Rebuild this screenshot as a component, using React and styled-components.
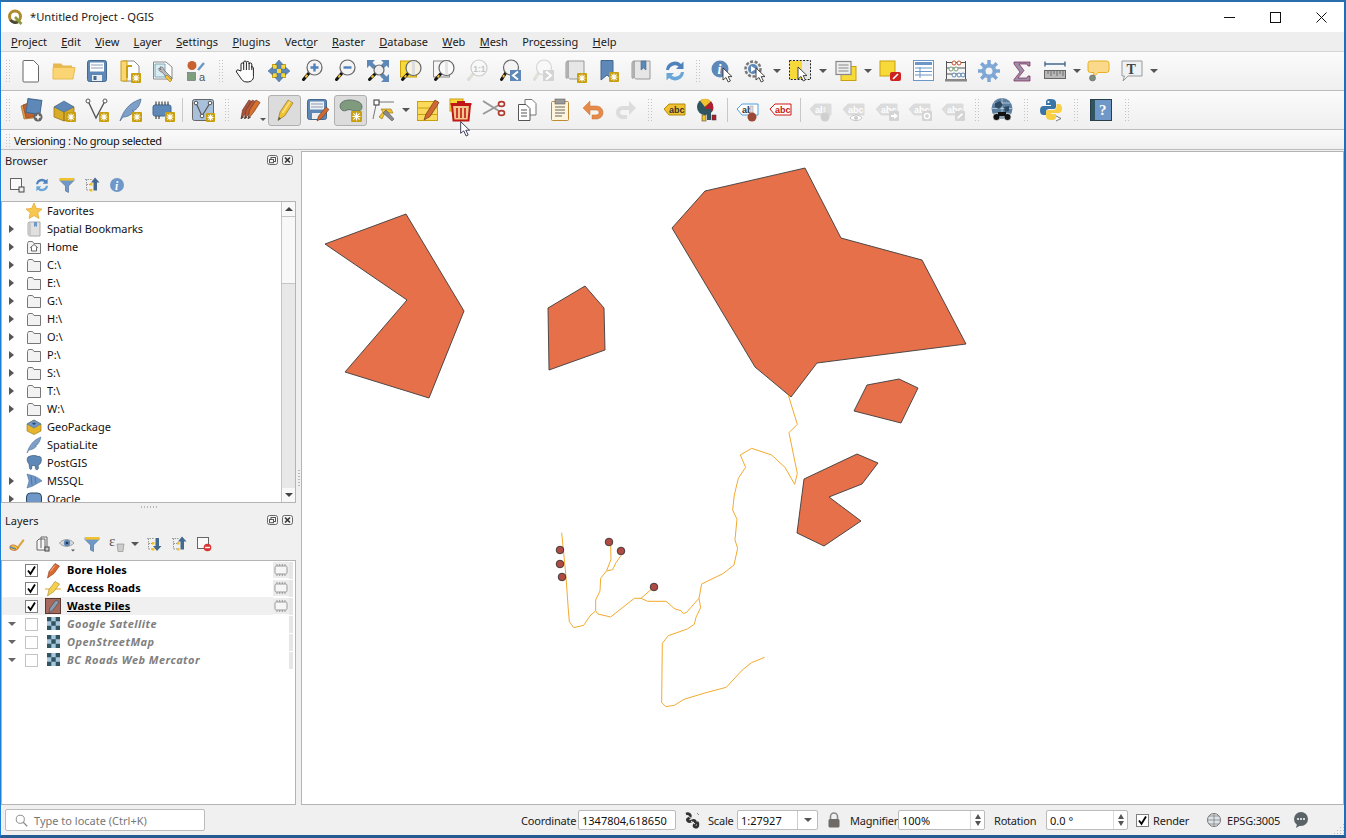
import React from "react";
import styled, { createGlobalStyle } from "styled-components";

const UI_FONT = `"Noto Sans", "Open Sans", "Liberation Sans", sans-serif`;

const GlobalStyle = createGlobalStyle`
  html, body { margin: 0; padding: 0; background: #fff; overflow: hidden; }
  * { box-sizing: border-box; }
`;

const Svg = styled.svg.attrs((p) => ({ viewBox: `0 0 ${p.$v || 24} ${p.$v || 24}` }))`
  width: ${(p) => p.$s || 24}px;
  height: ${(p) => p.$s || 24}px;
  flex: none;
  display: block;
  overflow: visible;
`;

/* shared drawing bits */
const Star = ({ x = 15, y = 15, s = 9 }) => (
  <g transform={`translate(${x} ${y})`}>
    <rect width={s} height={s} rx="1" fill="#c9a010" />
    <path d={`M${s / 2} 1.5V${s - 1.5}M1.5 ${s / 2}H${s - 1.5}M2.4 2.4L${s - 2.4} ${s - 2.4}M${s - 2.4} 2.4L2.4 ${s - 2.4}`} stroke="#fff" strokeWidth="1.1" />
  </g>
);
const Arrow = ({ x = 0, y = 0 }) => (
  <path transform={`translate(${x} ${y})`} d="M0 0V12L3 9.5L5.2 14L7.4 13L5.2 8.6H9Z" fill="#fff" stroke="#333" strokeWidth="0.9" strokeLinejoin="round" />
);
const Lens = ({ cx = 14, cy = 9, r = 7, fill = "#f4f4f4", line = "#666", muted }) => (
  <g>
    <path d={`M${cx - r * 0.7} ${cy + r * 0.7}L3.5 20.5`} stroke={muted ? "#ddd" : "#111"} strokeWidth="3" strokeLinecap="round" />
    <path d={`M${cx - r * 0.7 - 2} ${cy + r * 0.7 + 2}L5.5 18.5`} stroke={muted ? "#e8e4c8" : "#f2c12e"} strokeWidth="2" />
    <circle cx={cx} cy={cy} r={r} fill={fill} stroke={line} strokeWidth="1.2" />
  </g>
);
const Table = ({ x = 0, y = 0, w = 20, h = 20, line = "#6b96c8", head = "#6b96c8" }) => (
  <g transform={`translate(${x} ${y})`}>
    <rect x=".5" y=".5" width={w} height={h} fill="#fff" stroke={line} />
    <rect x="2" y="2" width={w - 3} height="3" fill={head} />
    <path d={`M2 8H${w - 1}M2 11.5H${w - 1}M2 15H${w - 1}M7 7V${h - 2}`} stroke={head} />
  </g>
);
const Scroll = ({ fill = "#c9c9c9" }) => (
  <g>
    <path d="M4 2H20V20H7C5 20 4 19 4 17Z" fill="#e6e6e6" stroke="#999" />
    <path d="M4 2C2 2 2 4 2 5V18C2 20 4 20 4 17Z" fill={fill} stroke="#999" />
  </g>
);
const Tag = ({ fill, line, text = "abc", color = "#333", w = 21 }) => (
  <g>
    <path d={`M1 11L6 6H${w + 1}V17H6Z`} fill={fill} stroke={line} />
    <text x="6" y="15" fontFamily="Liberation Sans, sans-serif" fontWeight="700" fontSize="9" fill={color}>{text}</text>
  </g>
);
const Folder = () => (
  <path d="M1.5 4.5V14.5H14.5V4.5H8L6.5 2.5H2.5Z" fill="#f2f2f2" stroke="#777" />
);
const Stub = ({ x, fill, dx = 0 }) => (
  <g transform={`translate(${x + dx} 0)`}>
    <path d="M0 21L1.5 12L8 2L12 4.5L5.5 14.5Z" fill={fill} stroke="#6d3a26" strokeWidth=".7" />
    <path d="M0 21L.6 18L3 19.4Z" fill="#444" />
  </g>
);

const ICONS = {
  new: <path d="M5 1.5H14.5L19.5 6.5V22a1 1 0 0 1-1 1H5a1 1 0 0 1-1-1V2.5a1 1 0 0 1 1-1Z" fill="#fff" stroke="#666" />,
  open: (<g><path d="M1 8V4.5H9L11 6.5H20V9Z" fill="#e8b84c" /><path d="M1 20V8.5H23L21 20Z" fill="#fbd574" stroke="#e8bb50" /></g>),
  save: (<g><rect x="2.5" y="1.5" width="19" height="21" rx="2" fill="#5d88b8" stroke="#45688f" /><rect x="5" y="3.5" width="14" height="9" fill="#fff" /><path d="M6 6H18M6 9H18" stroke="#8a9db5" /><rect x="7" y="16" width="10" height="6" fill="#eee" /><rect x="8.5" y="17" width="3" height="4" fill="#45688f" /></g>),
  printNew: (<g><path d="M5 2H16L21 7V22H5Z" fill="#fff" stroke="#888" /><path d="M3 2H9V22H3Z" fill="#fbd574" stroke="#c9a010" /><path d="M9 7H14M9 7V19" stroke="#c9a010" strokeWidth="2" /><Star x={13} y={14} s={10} /></g>),
  printMgr: (<g><path d="M2.5 3H15L21 8V20H2.5Z" fill="#fff" stroke="#888" /><path d="M4 5H14V18H4Z" fill="#d8ecf2" stroke="#7aa7b8" /><path d="M9 8a3 3 0 0 1 4 3L21 19L19 22L11 13A3 3 0 0 1 8 9L10 11Z" fill="#bbb" stroke="#555" strokeWidth=".6" /><path d="M16 16L21 21L19 23L14 18Z" fill="#f2c12e" stroke="#8a6d12" strokeWidth=".5" /></g>),
  style: (<g><circle cx="8" cy="6.5" r="4.5" fill="#c8612f" /><rect x="3.5" y="13.5" width="8" height="8" fill="#7d9f7d" stroke="#556" strokeWidth=".5" /><path d="M14 11L20 4" stroke="#6a96c4" strokeWidth="2.4" /><text x="15" y="22" fontFamily="Liberation Sans, sans-serif" fontSize="11" fill="#555">a</text></g>),
  hand: <path d="M7 12V5a1.4 1.4 0 0 1 2.7 0V3a1.4 1.4 0 0 1 2.7 0V3.5a1.4 1.4 0 0 1 2.7 0V5a1.4 1.4 0 0 1 2.7 0V8a1.4 1.4 0 0 1 1.6 1V16C20 20 18 23 13 23C9 23 8 21 6 18L2.5 13a1.5 1.5 0 0 1 2.4-1.7ZM9.7 5V11M12.4 3.5V11M15.1 4V11M17.8 7V11" fill="#fff" stroke="#222" strokeWidth="1" strokeLinejoin="round" />,
  pan: (<g><rect x="5.5" y="5.5" width="13" height="13" fill="#f8d93a" stroke="#c9a010" /><path d="M12 1L16 5.5H14V10H18.5V8L23 12L18.5 16V14H14V18.5H16L12 23L8 18.5H10V14H5.5V16L1 12L5.5 8V10H10V5.5H8Z" fill="#5d88b8" stroke="#45688f" strokeWidth=".5" /><rect x="10" y="10" width="4" height="4" fill="#f8d93a" /></g>),
  zoomIn: (<g><Lens cx={14.5} cy={8.5} r={7.5} /><path d="M14.5 4.5V12.5M10.5 8.5H18.5" stroke="#4f81bd" strokeWidth="2.4" /></g>),
  zoomOut: (<g><Lens cx={14.5} cy={8.5} r={7.5} /><path d="M10.5 8.5H18.5" stroke="#4f81bd" strokeWidth="2.4" /></g>),
  zoomFull: (<g><path d="M1 1H9L6.5 3.5L10 7L7 10L3.5 6.5L1 9ZM23 1V9L20.5 6.5L17 10L14 7L17.5 3.5L15 1ZM23 23H15L17.5 20.5L14 17L17 14L20.5 17.5L23 15Z" fill="#5d88b8" /><Lens cx={13} cy={11} r={5} fill="#eee" /></g>),
  zoomSel: (<g><rect x="1.5" y="2" width="16" height="16" fill="#f8d93a" stroke="#c9a010" /><Lens cx={14.5} cy={9} r={7.5} fill="#f5f3e0" /><path d="M14.5 2V16" stroke="#ddd" strokeWidth="3" /></g>),
  zoomLayer: (<g><rect x="1.5" y="2" width="16" height="16" fill="#f5f5f5" stroke="#888" /><Lens cx={14.5} cy={9} r={7.5} fill="#fafafa" /><path d="M14.5 2V16" stroke="#e4e4e4" strokeWidth="3" /></g>),
  zoom11: (<g><Lens cx={14} cy={9} r={8} fill="#f8f8f8" line="#ccc" muted /><text x="8.2" y="12.5" fontFamily="Liberation Sans, sans-serif" fontWeight="700" fontSize="8.5" fill="#c4c4c4">1:1</text></g>),
  zoomLast: (<g><Lens cx={13} cy={8.5} r={7.5} /><rect x="12" y="11" width="11" height="11" fill="#5d88b8" /><path d="M20 12.5L15 16.5L20 20.5" fill="none" stroke="#fff" strokeWidth="2" /></g>),
  zoomNext: (<g><Lens cx={13} cy={8.5} r={7.5} fill="#f8f8f8" line="#d6d6d6" muted /><rect x="12" y="11" width="11" height="11" fill="#d4d4d4" /><path d="M15 12.5L20 16.5L15 20.5" fill="none" stroke="#fff" strokeWidth="2" /></g>),
  newMap: (<g><Scroll /><Star x={13} y={14} s={10} /></g>),
  newMark: (<g><path d="M4 1.5H16V21L10 16L4 21Z" fill="#5d88b8" stroke="#45688f" /><Star x={12} y={13} s={10} /></g>),
  marks: (<g><Scroll /><path d="M11 2H16V11L13.5 9L11 11Z" fill="#5d88b8" stroke="#45688f" strokeWidth=".6" /></g>),
  refresh: (<g><path d="M3 11A9 9 0 0 1 18 5L20.5 2.5V10H13L15.5 7.5A6 6 0 0 0 6 11Z" fill="#4f81bd" /><path d="M21 13A9 9 0 0 1 6 19L3.5 21.5V14H11L8.5 16.5A6 6 0 0 0 18 13Z" fill="#6aa6d8" /></g>),
  identify: (<g><circle cx="10" cy="10" r="8.5" fill="#5d88b8" /><text x="7.5" y="15" fontFamily="Liberation Serif, serif" fontStyle="italic" fontWeight="700" fontSize="14" fill="#fff">i</text><Arrow x={13} y={9} /></g>),
  actions: (<g><circle cx="10" cy="10" r="7.5" fill="#eee" stroke="#777" strokeWidth="2.5" strokeDasharray="3 1.6" /><circle cx="10" cy="10" r="5" fill="#5d88b8" /><path d="M8 7L13 10L8 13Z" fill="#fff" /><Arrow x={13} y={9} /></g>),
  select: (<g><rect x="1.5" y="1.5" width="21" height="19" fill="#e9e9e9" stroke="#222" strokeDasharray="2 1.4" /><rect x="2" y="2" width="12" height="18" fill="#f8d93a" /><Arrow x={10} y={8} /></g>),
  selectAttr: (<g><rect x="7" y="7.5" width="15" height="14" fill="#f8d93a" stroke="#c9a010" /><rect x="2" y="2.5" width="15" height="13" fill="#eee" stroke="#888" strokeWidth="1.2" /><path d="M4.5 6H14.5M4.5 9H14.5M4.5 12H14.5" stroke="#888" strokeWidth="1.2" /></g>),
  deselect: (<g><rect x="2" y="2" width="15" height="15" fill="#f8d93a" stroke="#c9a010" /><rect x="12" y="13" width="11" height="9" rx="2" fill="#c22" /><path d="M15 20L20 15" stroke="#fff" strokeWidth="1.6" /></g>),
  attr: <Table x={2} y={1} w={20} h={20} />,
  calc: (<g><path d="M2.5 2V21M21.5 2V21M2.5 3.5H21.5M2.5 9H21.5M2.5 15H21.5" stroke="#555" fill="none" /><rect x="1" y="20" width="22" height="2.5" fill="#888" /><circle cx="10" cy="4" r="2" fill="#fff" stroke="#c8512a" /><circle cx="15" cy="4" r="2" fill="#fff" stroke="#c8512a" /><circle cx="7" cy="10" r="2" fill="#fff" stroke="#7d9f7d" /><circle cx="12" cy="10" r="2" fill="#fff" stroke="#7d9f7d" /><circle cx="10" cy="16" r="2" fill="#fff" stroke="#5d88b8" /><circle cx="15" cy="16" r="2" fill="#fff" stroke="#5d88b8" /><circle cx="19" cy="16" r="2" fill="#fff" stroke="#5d88b8" /></g>),
  gear: (<g><circle cx="12" cy="12" r="7.5" fill="#8fb2da" /><path d="M12 1V23M1 12H23M4.2 4.2L19.8 19.8M19.8 4.2L4.2 19.8" stroke="#7ea6d4" strokeWidth="3.4" /><circle cx="12" cy="12" r="3.5" fill="#f2f2f2" /></g>),
  sigma: <path d="M4 3H20V7H18L17 5H9L14 11.5L8 19H17L18 17H20V22H4V20.5L10 13L4 5Z" fill="#9d8fa6" stroke="#7a1f55" strokeWidth=".7" />,
  ruler: (<g><path d="M2 5H22M2 2.5V7.5M22 2.5V7.5" stroke="#45688f" strokeWidth="1.4" /><rect x="1.5" y="11.5" width="21" height="8" fill="#b9b9b9" stroke="#666" /><path d="M5 12V15M8 12V17M11 12V15M14 12V17M17 12V15M20 12V17" stroke="#555" strokeWidth=".8" /></g>),
  tip: (<g><path d="M3.5 2H19.5a2.5 2.5 0 0 1 2.5 2.5V11a2.5 2.5 0 0 1-2.5 2.5H11L6 19L7 13.5H3.5A2.5 2.5 0 0 1 1 11V4.5A2.5 2.5 0 0 1 3.5 2Z" fill="#fbd98a" stroke="#e8b020" /><circle cx="5.5" cy="19" r="3" fill="#7d8d7d" stroke="#556" strokeWidth=".5" /></g>),
  textNote: (<g><path d="M2 2H22V17H8L3 22L4.5 17H2Z" fill="#eef2f4" stroke="#999" /><text x="6.5" y="14.5" fontFamily="Liberation Serif, serif" fontWeight="700" fontSize="14" fill="#444">T</text></g>),
  addLayers: (<g><path d="M2 8L11 5L15 20L5 21Z" fill="#e09a4c" stroke="#a56a2c" strokeWidth=".7" /><path d="M4 7L12 4L17 18L7 20Z" fill="#c0622f" stroke="#8a4a20" strokeWidth=".7" /><rect x="8" y="1.5" width="14" height="14" transform="rotate(8 15 8)" fill="#5d88b8" stroke="#45688f" /><circle cx="19" cy="19" r="4.5" fill="#666" /><path d="M19 16.5V21.5M16.5 19H21.5" stroke="#fff" strokeWidth="1.5" /></g>),
  geoAdd: (<g><path d="M2 9L12 4L22 9V20L12 23L2 19Z" fill="#d9ac28" stroke="#8a6d12" strokeWidth=".7" /><path d="M2 9L12 3L22 9L12 14Z" fill="#5d88b8" stroke="#45688f" strokeWidth=".6" /><path d="M12 14V23" stroke="#8a6d12" /><Star x={14} y={14} s={10} /></g>),
  newVert: (<g><path d="M3 3L11 20L20 3" fill="none" stroke="#555" strokeWidth="1.4" /><circle cx="3" cy="3" r="2" fill="#fff" stroke="#555" /><circle cx="20" cy="3" r="2" fill="#fff" stroke="#555" /><Star x={14} y={14} s={10} /></g>),
  feather: (<g><path d="M2 23C5 14 10 5 23 1C22 7 20 10 17 12L14 12.5L16 13.5C12 18 8 19 5 19Z" fill="#7ea0c8" stroke="#45688f" strokeWidth=".7" /><Star x={14} y={14} s={10} /></g>),
  chip: (<g><rect x="2" y="7" width="18" height="11" rx="2" fill="#5d88b8" stroke="#45688f" /><path d="M5 3.5V7M8 3.5V7M11 3.5V7M14 3.5V7M17 3.5V7M5 18V21M8 18V21" stroke="#333" strokeWidth="1.1" /><Star x={14} y={14} s={10} /></g>),
  virtual: (<g><rect x="1.5" y="1.5" width="21" height="21" rx="2" fill="#a9c0da" stroke="#666" /><path d="M5 5L11 18L19 5" fill="none" stroke="#555" strokeWidth="1.2" /><circle cx="5" cy="5" r="1.8" fill="#fff" stroke="#555" /><circle cx="19" cy="5" r="1.8" fill="#fff" stroke="#555" /><circle cx="11" cy="18" r="1.8" fill="#fff" stroke="#555" /><Star x={15} y={15} s={9} /></g>),
  pencils: (<g><Stub x={1} fill="#a9533e" /><Stub x={4.5} fill="#b85a38" /><Stub x={8} fill="#d8702e" /><path d="M20 20H26L23 23Z" fill="#555" /></g>),
  pencil: (<g><path d="M5 22.5L7 14L15 2L20 5L12 17.5Z" fill="#f2c12e" stroke="#8a7a40" strokeWidth=".7" /><path d="M9.5 15L17 3.5" stroke="#fbe38c" strokeWidth="1.4" /><path d="M5 22.5L5.8 19L8 20.5Z" fill="#555" /></g>),
  saveEdit: (<g><rect x="1.5" y="1.5" width="19" height="20" rx="2" fill="#5d88b8" stroke="#45688f" /><rect x="4" y="3.5" width="14" height="8" fill="#eef0f2" /><path d="M5 6H17M5 9H17" stroke="#8a9db5" /><rect x="6" y="15" width="9" height="6" fill="#eee" /><path d="M11 23L12.5 18L20 9L23 11.5L15.5 20.5Z" fill="#d0692f" stroke="#6d3a26" strokeWidth=".6" /></g>),
  blob: (<g><path d="M1.5 6C4 1 14 1 20 4C24 6 24 12 20 13C15 14 11 10 7 12.5C3 14 0 10 1.5 6Z" fill="#7f9a7c" stroke="#566" strokeWidth=".8" /><Star x={12} y={13} s={11} /></g>),
  vertexTool: (<g><path d="M6 4H22M4 7L1 21" stroke="#777" fill="none" /><rect x="2" y="2" width="5" height="5" fill="#fff" stroke="#333" /><path d="M9 11H19L21 15H13L10 21L7 19L11 14Z" fill="#f2c12e" stroke="#8a6d12" strokeWidth=".6" /><path d="M14 12L22 21L20 23L11 15Z" fill="#8a8a8a" stroke="#444" strokeWidth=".5" /></g>),
  attrEdit: (<g><rect x="1.5" y="3.5" width="20" height="19" fill="#fbd95a" stroke="#c9a010" /><path d="M2 10H21M2 16.5H21" stroke="#c9a010" /><path d="M8 22L10 16L19 2L23 4.5L14 18.5Z" fill="#d0692f" stroke="#6d3a26" strokeWidth=".7" /></g>),
  trash: (<g><rect x="1" y="1" width="13" height="12" fill="#f8d93a" stroke="#c9a010" /><path d="M3 7H21L19.5 22.5H4.5Z" fill="#f4c78a" stroke="#c01818" strokeWidth="2" /><path d="M1.5 5H22.5V7H1.5ZM8 3H16V5H8Z" fill="#c01818" /><path d="M8 10V20M12 10V20M16 10V20" stroke="#c01818" strokeWidth="1.6" /></g>),
  cut: (<g><path d="M1 3L17 13M1 16L17 7" stroke="#999" strokeWidth="2" /><ellipse cx="19.5" cy="15" rx="3" ry="2.4" fill="none" stroke="#b03a2e" strokeWidth="1.6" /><ellipse cx="19.5" cy="6" rx="3" ry="2.4" fill="none" stroke="#b03a2e" strokeWidth="1.6" /></g>),
  copy: (<g><path d="M10 1.5H17L21 5.5V17H10Z" fill="#fff" stroke="#777" /><path d="M3.5 6.5H11L15 10.5V22.5H3.5Z" fill="#fff" stroke="#555" /><path d="M6 12H12M6 15H12M6 18H12" stroke="#555" /></g>),
  paste: (<g><rect x="3.5" y="3.5" width="17" height="19" rx="1" fill="#fff4dc" stroke="#c08a30" /><rect x="7" y="1" width="10" height="5" fill="#999" stroke="#666" strokeWidth=".6" /><path d="M7 9H17M7 12H17M7 15H17M7 18H14" stroke="#666" /></g>),
  undo: (<g><path d="M9 3V8H15C19.5 8 22 11 22 14.5C22 18.5 19 21 15 21H11V17H15C16.8 17 18 16 18 14.5C18 13 16.8 12 15 12H9V17L2 10Z" fill="#e6894a" stroke="#c9702f" strokeWidth=".5" /></g>),
  redo: (<g><path d="M15 3V8H9C4.5 8 2 11 2 14.5C2 18.5 5 21 9 21H13V17H9C7.2 17 6 16 6 14.5C6 13 7.2 12 9 12H15V17L22 10Z" fill="#dcdcdc" /></g>),
  labelYellow: <Tag fill="#f2c12e" line="#b08a12" />,
  pie: (<g><circle cx="9" cy="9" r="8" fill="#2f5560" /><path d="M9 9L4 2.5A8 8 0 0 1 15 3.5Z" fill="#f2c12e" /><path d="M9 9L15 3.5A8 8 0 0 1 14 16Z" fill="#b01e2e" /><rect x="11" y="11" width="4" height="11" fill="#2f5560" /><rect x="6" y="17" width="4" height="6" fill="#f2c12e" stroke="#333" strokeWidth=".5" /><rect x="16" y="17" width="4" height="5" fill="#b01e2e" stroke="#333" strokeWidth=".5" /></g>),
  labelPin: (<g><Tag fill="#fff" line="#4f9fe0" text="ab" /><rect x="14" y="8" width="3" height="9" fill="#ddd" stroke="#999" strokeWidth=".5" /><circle cx="16" cy="19" r="4.5" fill="#9c4a35" /></g>),
  labelRed: <Tag fill="#fff" line="#d01818" color="#c01818" />,
  labelPinOff: (<g><Tag fill="#dcdcdc" line="#dcdcdc" text="ab" color="#fff" /><rect x="14" y="8" width="3" height="9" fill="#eee" stroke="#ccc" strokeWidth=".5" /><circle cx="16" cy="19" r="4.5" fill="#cfcfcf" /></g>),
  labelEye: (<g><Tag fill="#dcdcdc" line="#dcdcdc" color="#fff" /><path d="M8 20C11 16 17 16 20 20C17 23.5 11 23.5 8 20Z" fill="#fff" stroke="#c4c4c4" /><circle cx="14" cy="20" r="2" fill="#ccc" /></g>),
  labelMove: (<g><Tag fill="#dcdcdc" line="#dcdcdc" color="#fff" /><rect x="14" y="13" width="10" height="10" rx="1" fill="#d4d4d4" /><path d="M16 17H19V15L23 18L19 21V19H16Z" fill="#fff" /></g>),
  labelRot: (<g><Tag fill="#dcdcdc" line="#dcdcdc" color="#fff" /><rect x="14" y="13" width="10" height="10" rx="1" fill="#d4d4d4" /><circle cx="19" cy="18" r="2.6" fill="none" stroke="#fff" strokeWidth="1.4" /></g>),
  labelEdit: (<g><Tag fill="#dcdcdc" line="#dcdcdc" color="#fff" /><rect x="14" y="13" width="10" height="10" rx="1" fill="#d4d4d4" /><path d="M16 21L17 18.5L21 15L22 16.5L18 20Z" fill="#fff" /></g>),
  globeSearch: (<g><circle cx="12" cy="10.5" r="10.5" fill="#5d7f9f" /><path d="M1.5 10.5H22.5M12 0V21M3.5 5H20.5M3.5 16H20.5" stroke="#cfdce8" strokeWidth=".7" /><path d="M5 5L10 3L13 7L9 11L5 9ZM14 9L19 8L19 13L15 14Z" fill="#2e4a63" /><circle cx="6.5" cy="19" r="3.6" fill="#111" stroke="#fff" strokeWidth=".7" /><circle cx="17.5" cy="19" r="3.6" fill="#111" stroke="#fff" strokeWidth=".7" /><path d="M8 14H16V18H8Z" fill="#111" /></g>),
  python: (<g><path d="M11.5 1C7 1 7 3 7 4.5V7H12V8H4.5C2 8 1 10 1 12.5C1 15 2 17 4.5 17H7V14C7 12 8.5 11 10 11H15C16.5 11 17 10 17 8.5V4.5C17 2 15 1 11.5 1Z" fill="#3a75a8" /><circle cx="9.5" cy="4" r="1.1" fill="#fff" /><path d="M12.5 22C17 22 17 20 17 18.5V16H12V15H19.5C22 15 23 13 23 10.5C23 8 22 6 19.5 6H17.5V9C17.5 11 16 12 14.5 12H9C7.5 12 7 13 7 14.5V18.5C7 21 9 22 12.5 22Z" fill="#f8cf45" /><path d="M17 18L22 20.5L17 23" fill="#fff" stroke="#777" /></g>),
  help: (<g><rect x="1.5" y="1.5" width="21" height="21" fill="#6f98c8" stroke="#2a3f4a" /><rect x="2" y="2" width="4" height="20" fill="#2f5560" /><text x="10" y="17" fontFamily="Liberation Serif, serif" fontWeight="700" fontSize="15" fill="#fff">?</text></g>),
  /* mouse pointer over the toolbar */
  pointer: <path d="M1 1V18L5.5 14.5L9 22L12 20.5L8.5 13.5H14Z" fill="#fff" stroke="#1a1a3a" strokeWidth="1.2" strokeLinejoin="round" />,
  /* 16px dock and tree icons */
  dNew: (<g><rect x="1.5" y="1.5" width="11" height="11" fill="#fafafa" stroke="#666" /><rect x="10" y="10" width="5" height="5" fill="#eee" stroke="#444" /></g>),
  dFilter: (<g><path d="M1 1.5H15V3.5L9.5 9V15.5L6.5 14V9L1 3.5Z" fill="#6f98c8" stroke="#45688f" strokeWidth=".6" /><rect x="1" y="1" width="14" height="2.6" fill="#f2c12e" /></g>),
  dCollapse: (<g><path d="M1 2.5H8M2.5 2.5V13M2.5 7.5H7M2.5 13H7" stroke="#999" strokeDasharray="1.5 1" /><rect x="6" y="6" width="2.5" height="2.5" fill="#f2c12e" /><rect x="6" y="12" width="2.5" height="2.5" fill="#f2c12e" /><path d="M11 0.5L15.5 5.5H13V13.5H9.5V5.5H7Z" fill="#45688f" /></g>),
  dExpand: (<g><path d="M1 2.5H8M2.5 2.5V13M2.5 7.5H7M2.5 13H7" stroke="#999" strokeDasharray="1.5 1" /><rect x="6" y="6" width="2.5" height="2.5" fill="#f2c12e" /><rect x="6" y="12" width="2.5" height="2.5" fill="#f2c12e" /><path d="M11 15L15.5 10H13V2H9.5V10H7Z" fill="#45688f" /></g>),
  dInfo: (<g><circle cx="8" cy="8" r="7" fill="#6f98c8" /><text x="6" y="12.5" fontFamily="Liberation Serif, serif" fontStyle="italic" fontWeight="700" fontSize="11.5" fill="#fff">i</text></g>),
  dStar: <path d="M8 0L10.3 5.4L16 6L11.7 9.8L13 15.5L8 12.6L3 15.5L4.3 9.8L0 6L5.7 5.4Z" fill="#f9c74f" stroke="#e0a020" strokeWidth=".7" />,
  dMarks: (<g><path d="M3 1H14V15H4C3 15 2 14 2 13V2Z" fill="#e0e0e0" stroke="#aaa" /><path d="M2 2H5V15H3.5L2 13Z" fill="#c9c9c9" /><path d="M8 1H11V6L9.5 5L8 6Z" fill="#6f98c8" /></g>),
  dHome: (<g><Folder /><path d="M8 5.5L11.5 8.5H10.5V12H5.5V8.5H4.5Z" fill="#fff" stroke="#555" strokeWidth=".9" /></g>),
  dFolder: <Folder />,
  dGeo: (<g><path d="M1 5L8 1L15 5V12L8 15.5L1 12Z" fill="#e6b52c" stroke="#8a6d12" strokeWidth=".6" /><path d="M1 5L8 1L15 5L8 9Z" fill="#6f98c8" stroke="#45688f" strokeWidth=".5" /><path d="M6 4.5L8 3.5L10 4.5L8 6Z" fill="#2e4a63" /></g>),
  dFeather: <path d="M1 16C3 9 7 3 15 0C14 4 13 6 11 8L9 8.5L10.5 9.2C8 12 5 13 3 13Z" fill="#7ea0c8" stroke="#45688f" strokeWidth=".5" />,
  dPg: <path d="M2 2C5 0 10 0 12 1.5C15 0.5 16 4 15 7C14.5 9 13 10 12 10L12.5 13C12 15 10 15.5 9.5 13.5L9 10.5H6L5.5 14C4.5 15 3.5 14 3.5 12.5L3 9C1 7 0.5 3.5 2 2Z" fill="#5d88b8" stroke="#2e4a63" strokeWidth=".6" />,
  dMs: (<g><path d="M1 1L8 3C11 4 14 6 16 8C13 9.5 10 11 7 13L1 15L3 8Z" fill="#6f98c8" stroke="#45688f" strokeWidth=".5" /><path d="M5 2.5L6 12M9 4L10 10.5" stroke="#45688f" strokeWidth=".7" /></g>),
  dOracle: <rect x="0.5" y="2" width="15" height="12" rx="4" fill="#6f98c8" stroke="#2e4a63" />,
  dBrush: (<g><path d="M8 11L14 3L15.5 4.5L9.5 12.5Z" fill="#d9a441" /><path d="M1 10C4 8 7 9 9.5 12C8 15 4 15 1 13Z" fill="#f2c12e" stroke="#c0622f" strokeWidth=".8" /><path d="M1 11L7 13" stroke="#5d88b8" strokeWidth="1.4" /></g>),
  dLayerAdd: (<g><path d="M5 3H11V14H3V5Z" fill="#f5f5f5" stroke="#666" /><path d="M7 1H13V11" fill="none" stroke="#666" /><path d="M7 1V12" stroke="#666" /><rect x="11" y="11" width="4" height="4" fill="#ccc" stroke="#444" /></g>),
  dEye: (<g><path d="M0.5 7C4 2.5 11 2.5 15 7C11 11.5 4 11.5 0.5 7Z" fill="#ddd" stroke="#999" /><circle cx="8" cy="7" r="3.2" fill="#5d88b8" /><circle cx="8" cy="7" r="1.3" fill="#1f3550" /><path d="M12 13.5H16L14 15.5Z" fill="#555" /></g>),
  dExpr: (<g><text x="0" y="10" fontFamily="Liberation Serif, serif" fontSize="15" fill="#555">ε</text><path d="M8 8H15L14 15.5H9Z" fill="#ccc" stroke="#888" strokeWidth=".6" /></g>),
  dRemove: (<g><rect x="1.5" y="1.5" width="11" height="11" fill="#fafafa" stroke="#666" /><circle cx="11.5" cy="11.5" r="3.8" fill="#d33" /><path d="M9 11.5H14" stroke="#fff" strokeWidth="1.4" /></g>),
  lPoint: (<g><path d="M2.5 16L4 9.5L10 1.5L14.5 4L9 11.5Z" fill="#d9692f" stroke="#8a3a20" strokeWidth=".6" /><path d="M5.5 9.5L10 3.5" stroke="#f2b48a" /></g>),
  lLine: (<g><path d="M0 9H16" stroke="#e8a020" /><path d="M2.5 16L4 9.5L10 1.5L14.5 4L9 11.5Z" fill="#f5d04f" stroke="#a08a30" strokeWidth=".6" /></g>),
  lPoly: (<g><rect x="0.5" y="0.5" width="15" height="15" fill="#a56a5c" stroke="#5a3a33" /><path d="M4 15L5 10L11 2L14 4L8 12Z" fill="#8a9db5" stroke="#444" strokeWidth=".6" /></g>),
  lRaster: (<g><rect x="2" y="1" width="13" height="13" fill="#a9c6de" /><path d="M2 1H6.3V5.3H2ZM10.7 1H15V5.3H10.7ZM6.3 5.3H10.7V9.7H6.3ZM2 9.7H6.3V14H2ZM10.7 9.7H15V14H10.7Z" fill="#2f5560" /></g>),
  chipGrey: (<g><rect x="2" y="4" width="12" height="8" rx="1.5" fill="#f6f6f6" stroke="#999" /><path d="M4 2V4M6.7 2V4M9.3 2V4M12 2V4M4 12V14M6.7 12V14M9.3 12V14M12 12V14" stroke="#999" /></g>),
  sGlobe: (<g><circle cx="8" cy="8" r="6.5" fill="#dde3e8" stroke="#777" /><path d="M1.5 8H14.5M8 1.5V14.5M3 4H13M3 12H13" stroke="#777" strokeWidth=".7" /></g>),
  sTrack: (<g><path d="M2 2C5 1 7 3 6 5S2 7 4 9S9 7 11 9S8 14 11 15S15 12 13 10" fill="none" stroke="#333" strokeWidth="2.8" /><path d="M4 4L8 7M7 9L11 12" stroke="#eee" /><path d="M13 1L15 3" stroke="#888" /></g>),
  sLock: (<g><path d="M4.5 8V4.5a3.5 3.5 0 0 1 7 0V8" fill="none" stroke="#8a8a8a" strokeWidth="1.6" /><rect x="2.5" y="7" width="11" height="8.5" rx="1.5" fill="#6e6a68" /></g>),
  sMsg: (<g><circle cx="8" cy="7" r="7" fill="#5a6468" /><path d="M4 12L3 16L8 13Z" fill="#5a6468" /><circle cx="5" cy="7" r="1" fill="#fff" /><circle cx="8" cy="7" r="1" fill="#fff" /><circle cx="11" cy="7" r="1" fill="#fff" /></g>),
  sSearch: (<g><circle cx="6.5" cy="6.5" r="5" fill="none" stroke="#888" strokeWidth="1.2" /><path d="M10 10L15 15" stroke="#888" strokeWidth="1.6" /></g>),
  /* window */
  qgis: (<g><circle cx="8" cy="7.5" r="5.5" fill="none" stroke="#b08a30" strokeWidth="3" /><path d="M3.5 11A6 6 0 0 0 11 13" fill="none" stroke="#4a4a3a" strokeWidth="3" /><path d="M8 8L14.5 15" stroke="#8a9a3a" strokeWidth="2.6" /></g>),
  winFloat: (<g><rect x=".5" y=".5" width="10" height="9" rx="2" fill="#f5f5f5" stroke="#666" /><rect x="4" y="2.5" width="4.5" height="4" fill="none" stroke="#555" /><rect x="2.5" y="4.5" width="4" height="3.2" fill="#f5f5f5" stroke="#555" /></g>),
  winClose: (<g><rect x=".5" y=".5" width="10" height="9" rx="2" fill="#f5f5f5" stroke="#666" /><path d="M3 2.5L8 7.5M8 2.5L3 7.5" stroke="#333" strokeWidth="1.6" /></g>),
};

const Icon = ({ name, size = 24, box = 24 }) => (
  <Svg $s={size} $v={box} aria-hidden="true">{ICONS[name]}</Svg>
);

/* tool rows: ":N" grip, "|" separator, "vN" drop arrow, "*x" checked button */
const TOOLS_ONE = [":13", "new", "open", "save", "printNew", "printMgr", "style", ":17", "hand", "pan", "zoomIn", "zoomOut", "zoomFull", "zoomSel", "zoomLayer", "zoom11", "zoomLast", "zoomNext", "newMap", "newMark", "marks", "refresh", ":14", "identify", "actions", "v12", "select", "v13", "selectAttr", "v11", "deselect", "attr", "calc", "gear", "sigma", "ruler", "v11", "tip", "textNote", "v12"];
const TOOLS_TWO = [":13", "addLayers", "geoAdd", "newVert", "feather", "chip", "|", "virtual", ":16", "pencils", "*pencil", "saveEdit", "*blob", "vertexTool", "v11", "attrEdit", "trash", "cut", "copy", "paste", "undo", "redo", ":16", "labelYellow", "pie", "|", "labelPin", "labelRed", "|", "labelPinOff", "labelEye", "labelMove", "labelRot", "labelEdit", ":16", "globeSearch", ":16", "python", ":17", "help", ":20"];

const MENUS = [
  ["", "P", "roject"], ["", "E", "dit"], ["", "V", "iew"], ["", "L", "ayer"], ["", "S", "ettings"], ["", "P", "lugins"],
  ["Vect", "o", "r"], ["", "R", "aster"], ["", "D", "atabase"], ["", "W", "eb"], ["", "M", "esh"], ["Pro", "c", "essing"], ["", "H", "elp"],
];
const BROWSER_ROWS = [
  ["dStar", "Favorites", false], ["dMarks", "Spatial Bookmarks", true], ["dHome", "Home", true],
  ["dFolder", "C:\\", true], ["dFolder", "E:\\", true], ["dFolder", "G:\\", true], ["dFolder", "H:\\", true],
  ["dFolder", "O:\\", true], ["dFolder", "P:\\", true], ["dFolder", "S:\\", true], ["dFolder", "T:\\", true], ["dFolder", "W:\\", true],
  ["dGeo", "GeoPackage", false], ["dFeather", "SpatiaLite", false], ["dPg", "PostGIS", false], ["dMs", "MSSQL", true], ["dOracle", "Oracle", true],
];
const LAYER_ROWS = [
  { icon: "lPoint", name: "Bore Holes", on: true },
  { icon: "lLine", name: "Access Roads", on: true },
  { icon: "lPoly", name: "Waste Piles", on: true, current: true },
  { icon: "lRaster", name: "Google Satellite" },
  { icon: "lRaster", name: "OpenStreetMap" },
  { icon: "lRaster", name: "BC Roads Web Mercator" },
];

const Window = styled.div`
  width: 1346px;
  height: 838px;
  display: flex;
  flex-direction: column;
  position: relative;
  overflow: hidden;
  background: #f0f0f0;
  border-top: 2px solid #2a6fac;
  border-left: 1px solid #1b7fd8;
  border-right: 2px solid #1b6fbc;
  border-bottom: 3px solid #235a92;
  font: 11px ${UI_FONT};
  color: #111;
`;
const TitleBar = styled.div`
  height: 30px;
  flex: none;
  display: flex;
  align-items: center;
  padding-left: 6px;
  background: #fff;
  color: #222;
`;
const TitleText = styled.span`
  margin: 0 0 2px 6px;
  flex: 1;
  font-size: 11.2px;
`;
const WinButton = styled.div`
  width: 46px;
  height: 30px;
  display: flex;
  align-items: center;
  justify-content: center;
`;
const MenuBar = styled.div`
  height: 20px;
  flex: none;
  display: flex;
  align-items: center;
  padding-left: 10px;
  background: #eeeeee;
  border-bottom: 1px solid #d4d4d4;
`;
const MenuItem = styled.span`
  margin-right: 14.3px;
  color: #1a1a1a;
  white-space: pre;
`;
const Toolbar = styled.div`
  height: 39px;
  flex: none;
  display: flex;
  align-items: center;
  background: linear-gradient(#fbfbfb, #efefef);
  border-bottom: 1px solid #bdbdbd;
`;
const ToolSlot = styled.div`
  width: 33px;
  height: 31px;
  flex: none;
  display: flex;
  align-items: center;
  justify-content: center;
  border-radius: 3px;
  ${(p) => p.$on && "background: #dcdcdc; border: 1px solid #b0b0b0;"}
`;
const Grip = styled.div`
  width: ${(p) => p.$w}px;
  flex: none;
  display: flex;
  justify-content: center;
  &::before {
    content: "";
    width: 6px;
    height: ${(p) => p.$h || 24}px;
    background: radial-gradient(circle, #c4c4c4 0.8px, transparent 1px) 0 0 / 3px 3px;
  }
`;
const Sep = styled.div`
  width: 7px;
  height: 24px;
  flex: none;
  position: relative;
  display: flex;
  justify-content: center;
  &::before {
    content: "";
    width: 1px;
    background: #c8c8c8;
  }
`;
const Drop = styled.div`
  width: ${(p) => p.$w}px;
  flex: none;
  display: flex;
  justify-content: center;
  &::before {
    content: "";
    border-top: 4px solid #555;
    border-left: 4px solid transparent;
    border-right: 4px solid transparent;
  }
`;
const Pointer = styled.div`
  position: absolute;
  left: 459px;
  top: 119px;
`;
const VersionBar = styled.div`
  height: 20px;
  flex: none;
  display: flex;
  align-items: center;
  padding-top: 1px;
  letter-spacing: -0.36px;
  background: linear-gradient(#fafafa, #f0f0f0);
  border-bottom: 1px solid #bdbdbd;
`;
const Main = styled.div`
  flex: 1;
  min-height: 0;
  display: flex;
`;
const Dock = styled.div`
  width: 295px;
  flex: none;
  display: flex;
  flex-direction: column;
`;
const DockHeader = styled.div`
  height: 20px;
  flex: none;
  display: flex;
  align-items: center;
  padding: 0 3px 0 4px;
  color: #222;
`;
const DockTitle = styled.span`
  flex: 1;
`;
const DockBtn = styled.div`
  margin-left: 4px;
  flex: none;
`;
const DockTools = styled.div`
  height: ${(p) => p.$h}px;
  flex: none;
  display: flex;
  align-items: center;
  padding: 0 0 ${(p) => p.$pad}px 3px;
`;
const DockTool = styled.div`
  width: 25px;
  flex: none;
  display: flex;
  justify-content: center;
`;
const TreeBox = styled.div`
  flex: ${(p) => (p.$fill ? 1 : "none")};
  height: ${(p) => (p.$fill ? "auto" : "302px")};
  min-height: 0;
  display: flex;
  background: #fff;
  border: 1px solid #b4b4b4;
  overflow: hidden;
`;
const TreeList = styled.div`
  flex: 1;
  min-width: 0;
  overflow: hidden;
`;
const TreeRow = styled.div`
  height: 18px;
  display: flex;
  align-items: center;
  white-space: nowrap;
`;
const Expander = styled.div`
  width: 21px;
  flex: none;
  display: flex;
  justify-content: center;
  padding-right: 2px;
  &::before {
    content: "";
    visibility: ${(p) => (p.$show ? "visible" : "hidden")};
    border-left: 5px solid #555;
    border-top: 4px solid transparent;
    border-bottom: 4px solid transparent;
  }
`;
const IconCell = styled.div`
  width: 21px;
  flex: none;
  display: flex;
  justify-content: center;
`;
const RowText = styled.span`
  margin-left: 3px;
  padding-bottom: 1px;
`;
const ScrollTrack = styled.div`
  width: 14px;
  flex: none;
  display: flex;
  flex-direction: column;
  background: #e8e8e8;
  border-left: 1px solid #c4c4c4;
`;
const ScrollEnd = styled.div`
  height: 14px;
  flex: none;
  display: flex;
  align-items: center;
  justify-content: center;
  background: #f8f8f8;
  &::before {
    content: "";
    border-left: 4px solid transparent;
    border-right: 4px solid transparent;
    ${(p) => (p.$up ? "border-bottom" : "border-top")}: 4px solid #444;
  }
`;
const ScrollThumb = styled.div`
  height: 68px;
  flex: none;
  background: #f8f8f8;
  border-top: 1px solid #c4c4c4;
  border-bottom: 1px solid #c4c4c4;
`;
const ScrollGap = styled.div`
  flex: 1;
`;
const Splitter = styled.div`
  height: 7px;
  flex: none;
  display: flex;
  justify-content: center;
  align-items: center;
  &::before {
    content: "";
    width: 18px;
    height: 2px;
    background: radial-gradient(circle, #b8b8b8 0.7px, transparent 0.9px) 0 0 / 3px 2px;
  }
`;
const VSplitter = styled.div`
  width: 5px;
  flex: none;
  display: flex;
  align-items: center;
  justify-content: center;
  &::before {
    content: "";
    width: 2px;
    height: 18px;
    background: radial-gradient(circle, #b8b8b8 0.7px, transparent 0.9px) 0 0 / 2px 3px;
  }
`;
const LayerList = styled.div`
  flex: 1;
  min-width: 0;
`;
const LayerRow = styled.div`
  height: 18px;
  display: flex;
  align-items: center;
  white-space: nowrap;
`;
const LayerMain = styled.div`
  flex: 1;
  height: 18px;
  min-width: 0;
  display: flex;
  align-items: center;
  background: ${(p) => (p.$current ? "#f0f0f0" : "transparent")};
`;
const LayerArrow = styled.div`
  width: 23px;
  flex: none;
  display: flex;
  justify-content: center;
  padding-right: 3px;
  &::before {
    content: "";
    visibility: ${(p) => (p.$show ? "visible" : "hidden")};
    border-top: 4px solid #666;
    border-left: 4px solid transparent;
    border-right: 4px solid transparent;
  }
`;
const Check = styled.div`
  width: 13px;
  height: 13px;
  flex: none;
  margin-right: 1px;
  background: #fff;
  border: 1px solid ${(p) => (p.$on ? "#808080" : "#c4c4c4")};
  display: flex;
  align-items: center;
  justify-content: center;
`;
const LayerIcon = styled.div`
  width: 27px;
  flex: none;
  display: flex;
  justify-content: center;
`;
const LayerName = styled.span`
  color: ${(p) => (p.$on ? "#000" : "#808080")};
  font-weight: 700;
  font-style: ${(p) => (p.$on ? "normal" : "italic")};
  letter-spacing: ${(p) => (p.$on ? "0.1px" : "0.45px")};
  text-decoration: ${(p) => (p.$current ? "underline" : "none")};
  margin-left: 1px;
  padding-bottom: 1px;
`;
const ChipCell = styled.div`
  width: 16px;
  flex: none;
  height: 16px;
  display: flex;
  justify-content: center;
  align-items: center;
  background: ${(p) => (p.$show ? "#ececec" : "transparent")};
`;
const RowBar = styled.div`
  width: 4px;
  height: 17px;
  flex: none;
  margin-right: 2px;
  background: #e6e6e6;
`;
const MapFrame = styled.div`
  flex: 1;
  min-width: 0;
  margin-top: 1px;
  background: #fff;
  border: 1px solid #b4b4b4;
`;
const MapDrawing = styled.svg`
  display: block;
  width: 100%;
  height: 100%;
`;
const StatusBar = styled.div`
  height: 30px;
  flex: none;
  display: flex;
  align-items: center;
  padding-left: 4px;
`;
const Locator = styled.div`
  width: 200px;
  height: 22px;
  flex: none;
  margin-right: 316px;
  display: flex;
  align-items: center;
  gap: 6px;
  padding-left: 9px;
  background: #fff;
  border: 1px solid #bbb;
  border-radius: 2px;
  color: #777;
`;
const StatusLabel = styled.span`
  width: ${(p) => p.$w}px;
  flex: none;
  white-space: nowrap;
  color: #222;
  letter-spacing: -0.2px;
`;
const StatusIcon = styled.div`
  width: ${(p) => p.$w}px;
  flex: none;
  display: flex;
  justify-content: center;
`;
const Field = styled.div`
  width: ${(p) => p.$w}px;
  height: 20px;
  flex: none;
  display: flex;
  align-items: center;
  padding-left: 3px;
  background: #fff;
  border: 1px solid #bbb;
  border-radius: 2px;
`;
const FieldText = styled.span`
  flex: 1;
`;
const ComboArrow = styled.div`
  width: 20px;
  align-self: stretch;
  flex: none;
  display: flex;
  align-items: center;
  justify-content: center;
  border-left: 1px solid #ccc;
  &::before {
    content: "";
    border-top: 4px solid #555;
    border-left: 4px solid transparent;
    border-right: 4px solid transparent;
  }
`;
const Spinner = styled.div`
  width: 14px;
  align-self: stretch;
  flex: none;
  display: flex;
  flex-direction: column;
  align-items: center;
  justify-content: center;
  gap: 2px;
  border-left: 1px solid #ddd;
  &::before, &::after {
    content: "";
    border-left: 3.5px solid transparent;
    border-right: 3.5px solid transparent;
  }
  &::before { border-bottom: 5px solid #555; }
  &::after { border-top: 5px solid #555; }
`;
const SizeGrip = styled.div`
  position: absolute;
  right: 0;
  bottom: 1px;
  width: 11px;
  height: 11px;
  background: radial-gradient(circle, #bbb 0.7px, transparent 0.9px) 0 0 / 3px 3px;
  clip-path: polygon(100% 0, 100% 100%, 0 100%);
`;

const renderTools = (items) =>
  items.map((item, i) => {
    if (item[0] === ":") return <Grip key={i} $w={Number(item.slice(1))} />;
    if (item === "|") return <Sep key={i} />;
    if (/^v\d+$/.test(item)) return <Drop key={i} $w={Number(item.slice(1))} />;
    const on = item[0] === "*";
    return (
      <ToolSlot key={i} $on={on}>
        <Icon name={on ? item.slice(1) : item} />
      </ToolSlot>
    );
  });

const TreeIcon = ({ name }) => <Icon name={name} size={16} box={16} />;

const CheckMark = () => (
  <svg width="11" height="11" aria-hidden="true">
    <path d="M2 5.5L4.5 8.8L9 1.5" fill="none" stroke="#000" strokeWidth="1.8" />
  </svg>
);

const DockButtons = () => (
  <>
    <DockBtn><Icon name="winFloat" size={11} box={11} /></DockBtn>
    <DockBtn><Icon name="winClose" size={11} box={11} /></DockBtn>
  </>
);

const MapView = () => (
  <MapDrawing viewBox="302 152 1041 652" aria-hidden="true">
    <g fill="#e5704a" stroke="#3c3c3c" strokeWidth="0.9" strokeLinejoin="round">
      <polygon points="325,244 406,214 464,311 429,398 345,372 407,300" />
      <polygon points="548,308 585,286 604,308 605,350 549,370" />
      <polygon points="672,228 705,191 805,168 841,238 922,260 966,344 817,363 791,397 755,367" />
      <polygon points="867,385 899,379 918,388 901,423 854,411" />
      <polygon points="804,479 857,454 878,463 862,484 829,497 861,521 824,546 797,533" />
    </g>
    <g transform="translate(540 380) scale(0.3333)" fill="none" stroke="#f2a92e" strokeWidth="3">
      <polyline points="745,45 772,133 747,158 772,280 764,313 735,262 695,225 635,205 601,225 617,262 595,295 583,345 578,390 591,418 585,480 593,505 582,555 549,581 485,612 477,655 482,683 468,712 463,733 442,747 385,767 367,790 365,968 378,980 403,976 432,958 495,939 559,922 607,870 635,848 674,832" />
      <polyline points="65,458 78,590 85,690 88,725 101,743 131,736 150,708 167,692 173,702 212,711 283,655 303,655 323,664 378,664 405,687 423,692 430,701 440,697 477,655" />
      <polyline points="167,692 167,660 180,633 182,595 200,572 213,538 212,497" />
      <polyline points="200,573 218,569 228,548 243,527" />
      <polyline points="303,655 342,621" />
    </g>
    <g fill="#b04a42" stroke="#333" strokeWidth="0.9">
      <circle cx="560" cy="550" r="3.8" />
      <circle cx="560" cy="564" r="3.8" />
      <circle cx="562" cy="577" r="3.8" />
      <circle cx="609" cy="542" r="3.8" />
      <circle cx="621" cy="551" r="3.8" />
      <circle cx="654" cy="587" r="3.8" />
    </g>
  </MapDrawing>
);

export default function App() {
  return (
    <Window>
      <GlobalStyle />
      <TitleBar>
        <Icon name="qgis" size={17} box={17} />
        <TitleText>*Untitled Project - QGIS</TitleText>
        <WinButton><svg width="11" height="11"><path d="M0 5.5H11" stroke="#111" /></svg></WinButton>
        <WinButton><svg width="11" height="11"><rect x=".5" y=".5" width="10" height="10" fill="none" stroke="#111" /></svg></WinButton>
        <WinButton><svg width="11" height="11"><path d="M.5 .5L10.5 10.5M10.5 .5L.5 10.5" stroke="#111" /></svg></WinButton>
      </TitleBar>
      <MenuBar>
        {MENUS.map(([pre, key, post], i) => (
          <MenuItem key={i}>{pre}<u>{key}</u>{post}</MenuItem>
        ))}
      </MenuBar>
      <Toolbar>{renderTools(TOOLS_ONE)}</Toolbar>
      <Toolbar>{renderTools(TOOLS_TWO)}</Toolbar>
      <VersionBar>
        <Grip $w={13} $h={15} />
        Versioning : No group selected
      </VersionBar>
      <Main>
        <Dock>
          <DockHeader>
            <DockTitle>Browser</DockTitle>
            <DockButtons />
          </DockHeader>
          <DockTools $h={31} $pad={1}>
            {["dNew", "refresh", "dFilter", "dCollapse", "dInfo"].map((name) => (
              <DockTool key={name}><Icon name={name} size={16} box={name === "refresh" ? 24 : 16} /></DockTool>
            ))}
          </DockTools>
          <TreeBox>
            <TreeList>
              {BROWSER_ROWS.map(([icon, label, more]) => (
                <TreeRow key={label}>
                  <Expander $show={more} />
                  <IconCell><TreeIcon name={icon} /></IconCell>
                  <RowText>{label}</RowText>
                </TreeRow>
              ))}
            </TreeList>
            <ScrollTrack>
              <ScrollEnd $up />
              <ScrollThumb />
              <ScrollGap />
              <ScrollEnd />
            </ScrollTrack>
          </TreeBox>
          <Splitter />
          <DockHeader>
            <DockTitle>Layers</DockTitle>
            <DockButtons />
          </DockHeader>
          <DockTools $h={30} $pad={2}>
            <DockTool><TreeIcon name="dBrush" /></DockTool>
            <DockTool><TreeIcon name="dLayerAdd" /></DockTool>
            <DockTool><TreeIcon name="dEye" /></DockTool>
            <DockTool><TreeIcon name="dFilter" /></DockTool>
            <DockTool><TreeIcon name="dExpr" /></DockTool>
            <Drop $w={12} />
            <DockTool><TreeIcon name="dExpand" /></DockTool>
            <DockTool><TreeIcon name="dCollapse" /></DockTool>
            <DockTool><TreeIcon name="dRemove" /></DockTool>
          </DockTools>
          <TreeBox $fill>
            <LayerList>
              {LAYER_ROWS.map((row) => (
                <LayerRow key={row.name}>
                  <LayerMain $current={row.current}>
                    <LayerArrow $show={!row.on} />
                    <Check $on={row.on}>{row.on && <CheckMark />}</Check>
                    <LayerIcon><TreeIcon name={row.icon} /></LayerIcon>
                    <LayerName $on={row.on} $current={row.current}>{row.name}</LayerName>
                  </LayerMain>
                  <ChipCell $show={row.on}>{row.on && <TreeIcon name="chipGrey" />}</ChipCell>
                  <RowBar />
                </LayerRow>
              ))}
            </LayerList>
          </TreeBox>
        </Dock>
        <VSplitter />
        <MapFrame><MapView /></MapFrame>
      </Main>
      <StatusBar>
        <Locator>
          <Icon name="sSearch" size={13} box={16} />
          Type to locate (Ctrl+K)
        </Locator>
        <StatusLabel $w={57}>Coordinate</StatusLabel>
        <Field $w={98}><FieldText>1347804,618650</FieldText></Field>
        <StatusIcon $w={32}><TreeIcon name="sTrack" /></StatusIcon>
        <StatusLabel $w={29}>Scale</StatusLabel>
        <Field $w={81}><FieldText>1:27927</FieldText><ComboArrow /></Field>
        <StatusIcon $w={32}><TreeIcon name="sLock" /></StatusIcon>
        <StatusLabel $w={48}>Magnifier</StatusLabel>
        <Field $w={87}><FieldText>100%</FieldText><Spinner /></Field>
        <StatusIcon $w={9} />
        <StatusLabel $w={52}>Rotation</StatusLabel>
        <Field $w={82}><FieldText>0.0 °</FieldText><Spinner /></Field>
        <StatusIcon $w={8} />
        <Check $on><CheckMark /></Check>
        <StatusIcon $w={3} />
        <StatusLabel $w={47}>Render</StatusLabel>
        <StatusIcon $w={27}><TreeIcon name="sGlobe" /></StatusIcon>
        <StatusLabel $w={62}>EPSG:3005</StatusLabel>
        <StatusIcon $w={24}><TreeIcon name="sMsg" /></StatusIcon>
        <SizeGrip />
      </StatusBar>
      <Pointer><Icon name="pointer" size={15} box={22} /></Pointer>
    </Window>
  );
}
